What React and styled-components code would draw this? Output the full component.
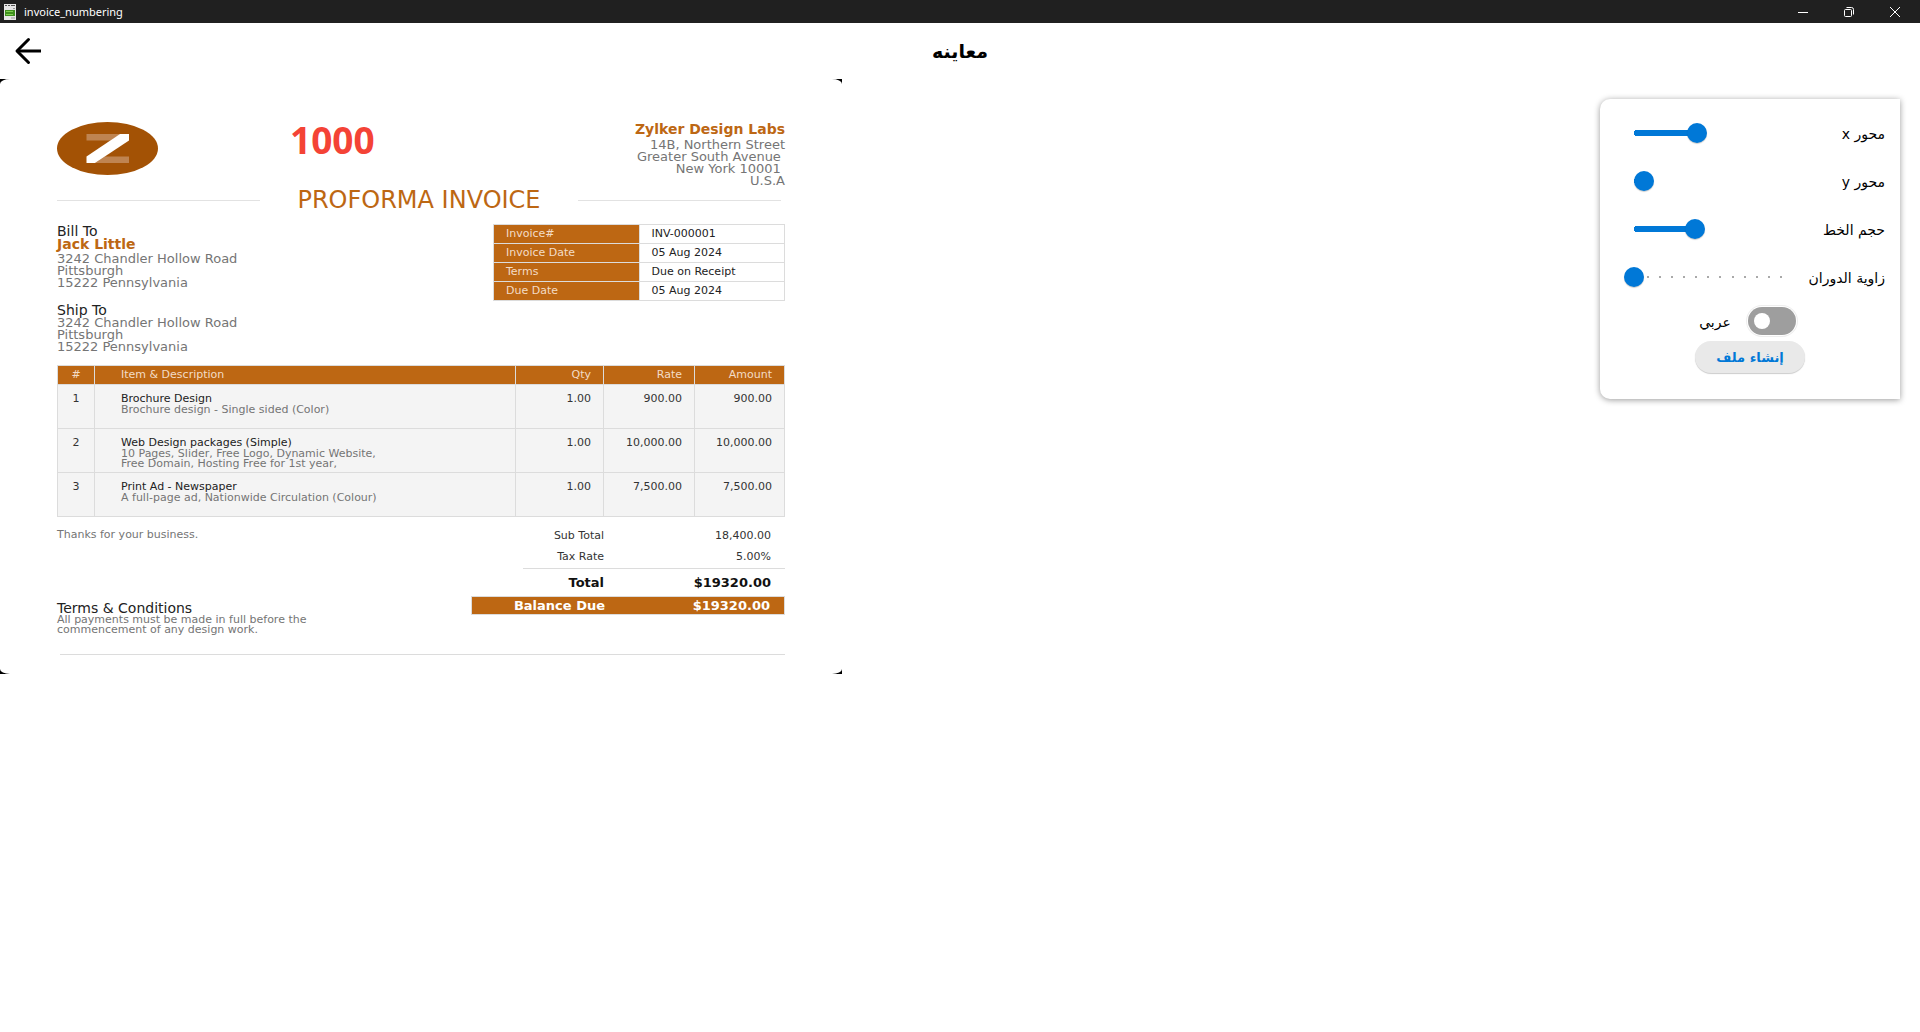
import React, { useState } from "react";
import styled, { createGlobalStyle } from "styled-components";

const infoRows = [
  ["Invoice#", "INV-000001"],
  ["Invoice Date", "05 Aug 2024"],
  ["Terms", "Due on Receipt"],
  ["Due Date", "05 Aug 2024"],
];

const items = [
  {
    title: "Brochure Design",
    lines: ["Brochure design - Single sided (Color)"],
    qty: "1.00",
    rate: "900.00",
    amount: "900.00",
  },
  {
    title: "Web Design packages (Simple)",
    lines: [
      "10 Pages, Slider, Free Logo, Dynamic Website,",
      "Free Domain, Hosting Free for 1st year,",
    ],
    qty: "1.00",
    rate: "10,000.00",
    amount: "10,000.00",
  },
  {
    title: "Print Ad - Newspaper",
    lines: ["A full-page ad, Nationwide Circulation (Colour)"],
    qty: "1.00",
    rate: "7,500.00",
    amount: "7,500.00",
  },
];

const WindowBar = () => (
  <TitleBar>
    <AppIcon viewBox="0 0 12 16">
      <rect width="12" height="16" fill="#e6e6e6" />
      <path d="M1 1.5h2M4 1.5h2M7 1.5h4" stroke="#555" />
      <path d="M9 4.5h2" stroke="#999" />
      <rect x="1" y="6" width="10" height="6" fill="#3f8f1f" />
      <path d="M2 7.5h7M2 10.5h7" stroke="#7fd04f" />
      <path d="M7 14h4" stroke="#999" />
    </AppIcon>
    <AppName>invoice_numbering</AppName>
    <WindowButton aria-label="Minimize">
      <svg width="10" height="10" viewBox="0 0 10 10">
        <path d="M0 5.5h10" stroke="#fff" />
      </svg>
    </WindowButton>
    <WindowButton aria-label="Restore">
      <svg width="10" height="10" viewBox="0 0 10 10" fill="none" stroke="#fff">
        <rect x="0.5" y="2.5" width="7" height="7" rx="1" />
        <path d="M2.5 0.5h5a2 2 0 0 1 2 2v5" />
      </svg>
    </WindowButton>
    <WindowButton aria-label="Close">
      <svg width="10" height="10" viewBox="0 0 10 10">
        <path d="M0 0l10 10M10 0L0 10" stroke="#fff" />
      </svg>
    </WindowButton>
  </TitleBar>
);

const Invoice = () => (
  <Sheet>
    <Paper>
      <PaperHead>
        <Logo viewBox="0 0 101 53">
          <ellipse cx="50.5" cy="26.5" rx="50.5" ry="26.5" fill="#a35205" />
          <path d="M29.5 12h34l-10 6.5h-24zM38 41l10-6.5h24V41z" fill="#bf8451" />
          <path d="M63 12h9v6.5L38 41h-8.500v-6.500z" fill="#fff" />
        </Logo>
        <Company>
          <CompanyName>Zylker Design Labs</CompanyName>
          <Address>
            {"14B, Northern Street\nGreater South Avenue \nNew York 10001 \nU.S.A"}
          </Address>
        </Company>
      </PaperHead>

      <HeadingRow>
        <Rule />
        <Heading>PROFORMA INVOICE</Heading>
        <Rule />
      </HeadingRow>

      <Parties>
        <div>
          <PartyTitle>Bill To</PartyTitle>
          <PartyName>Jack Little</PartyName>
          <Address>
            {"3242 Chandler Hollow Road\nPittsburgh\n15222 Pennsylvania"}
          </Address>
          <ShipTo>
            <PartyTitle>Ship To</PartyTitle>
            <Address>
              {"3242 Chandler Hollow Road\nPittsburgh\n15222 Pennsylvania"}
            </Address>
          </ShipTo>
        </div>
        <InfoTable>
          <tbody>
            {infoRows.map(([name, value]) => (
              <tr key={name}>
                <th scope="row">{name}</th>
                <td>{value}</td>
              </tr>
            ))}
          </tbody>
        </InfoTable>
      </Parties>

      <ItemsTable>
        <colgroup>
          <Col $width="37px" />
          <Col />
          <Col $width="88px" />
          <Col $width="91px" />
          <Col $width="90px" />
        </colgroup>
        <thead>
          <tr>
            <HeadCell $align="center">#</HeadCell>
            <HeadCell $align="left">Item &amp; Description</HeadCell>
            <HeadCell>Qty</HeadCell>
            <HeadCell>Rate</HeadCell>
            <HeadCell>Amount</HeadCell>
          </tr>
        </thead>
        <tbody>
          {items.map((item, i) => (
            <tr key={item.title}>
              <Cell $align="center">{i + 1}</Cell>
              <Cell $align="left">
                <ItemTitle>{item.title}</ItemTitle>
                <ItemText>{item.lines.join("\n")}</ItemText>
              </Cell>
              <Cell>{item.qty}</Cell>
              <Cell>{item.rate}</Cell>
              <Cell>{item.amount}</Cell>
            </tr>
          ))}
        </tbody>
      </ItemsTable>

      <Bottom>
        <Notes>
          <Thanks>Thanks for your business.</Thanks>
          <div>
            <PartyTitle>Terms &amp; Conditions</PartyTitle>
            <ItemText>
              {"All payments must be made in full before the\ncommencement of any design work."}
            </ItemText>
          </div>
        </Notes>
        <Totals>
          <TotalRow>
            <span>Sub Total</span>
            <span>18,400.00</span>
          </TotalRow>
          <TotalRow>
            <span>Tax Rate</span>
            <span>5.00%</span>
          </TotalRow>
          <TotalsRule />
          <GrandRow>
            <span>Total</span>
            <span>$19320.00</span>
          </GrandRow>
          <BalanceRow>
            <span>Balance Due</span>
            <span>$19320.00</span>
          </BalanceRow>
        </Totals>
      </Bottom>
      <EndRule />
    </Paper>
    <Stamp>1000</Stamp>
  </Sheet>
);

const SliderRow = ({ id, label, initial, ticks = 0 }) => {
  const [value, setValue] = useState(initial);
  return (
    <Row>
      <SliderBox>
        {ticks > 0 && (
          <Ticks>
            {Array.from({ length: ticks }, (_, i) => (
              <i key={i} />
            ))}
          </Ticks>
        )}
        <Slider
          id={id}
          type="range"
          min="0"
          max="150"
          value={value}
          onChange={(e) => setValue(Number(e.target.value))}
          style={{ "--pos": `${(value / 150) * 88 + 6}%` }}
        />
      </SliderBox>
      <Label htmlFor={id}>{label}</Label>
    </Row>
  );
};

const Settings = () => (
  <Panel>
    <SliderRow id="axis-x" label="محور x" initial={63} />
    <SliderRow id="axis-y" label="محور y" initial={10} />
    <SliderRow id="font-size" label="حجم الخط" initial={61} />
    <SliderRow id="rotation" label="زاوية الدوران" initial={0} ticks={12} />
    <SwitchRow>
      <Label htmlFor="arabic">عربي</Label>
      <Switch id="arabic" type="checkbox" role="switch" />
    </SwitchRow>
    <CreateButton>إنشاء ملف</CreateButton>
  </Panel>
);

const App = () => (
  <>
    <GlobalStyle />
    <WindowBar />
    <AppBar>
      <BackButton aria-label="رجوع">
        <svg
          width="40"
          height="40"
          viewBox="0 0 40 40"
          fill="none"
          stroke="#000"
          strokeWidth="3"
        >
          <path d="M33 20H9" />
          <path d="M20.500 8.500L9 20l11.500 11.500" strokeLinecap="round" strokeLinejoin="round" />
        </svg>
      </BackButton>
      <PageTitle dir="rtl">معاينه</PageTitle>
    </AppBar>
    <Main>
      <Invoice />
      <Settings />
    </Main>
  </>
);

const GlobalStyle = createGlobalStyle`
  * {
    box-sizing: border-box;
  }
  body {
    margin: 0;
    background: #fff;
    color: #000;
    font-family: "Noto Sans", "DejaVu Sans", sans-serif;
  }
  button {
    padding: 0;
    border: none;
    background: none;
    font-family: inherit;
  }
`;

const TitleBar = styled.header`
  display: flex;
  align-items: center;
  height: 23px;
  padding: 0 2px 0 4px;
  background: #202020;
`;

const AppIcon = styled.svg`
  width: 12px;
  height: 16px;
`;

const AppName = styled.span`
  flex: 1;
  padding-left: 8px;
  color: #fff;
  font-size: 11px;
`;

const WindowButton = styled.button`
  display: flex;
  align-items: center;
  justify-content: center;
  width: 46px;
  height: 20px;
`;

const AppBar = styled.nav`
  display: grid;
  grid-template-columns: 1fr auto 1fr;
  align-items: center;
  height: 56px;
  padding: 0 8px;
`;

const BackButton = styled.button`
  width: 40px;
  height: 40px;
`;

const PageTitle = styled.h1`
  margin: 0;
  font-family: "DejaVu Sans", sans-serif;
  font-size: 19px;
  font-weight: 700;
`;

const Main = styled.main`
  display: flex;
  align-items: flex-start;
  justify-content: space-between;
`;

const Sheet = styled.section`
  position: relative;
  flex: 0 1 842px;
  background: #000;
`;

const Paper = styled.article`
  padding: 32px 57px 19px;
  border-radius: 10px / 5px;
  background: #fff;
  color: #757575;
  font-family: "DejaVu Sans", sans-serif;
  font-size: 11px;
`;

const Stamp = styled.div`
  position: absolute;
  top: 36px;
  left: 290px;
  color: #f44336;
  font-size: 37px;
  font-weight: 700;
  line-height: 50px;
`;

const PaperHead = styled.div`
  display: flex;
  justify-content: space-between;
  height: 77px;
`;

const Logo = styled.svg`
  width: 101px;
  height: 53px;
  margin-top: 11px;
`;

const Company = styled.div`
  padding-top: 11px;
  text-align: right;
`;

const CompanyName = styled.div`
  margin-bottom: 3px;
  color: #bd6713;
  font-size: 14px;
  font-weight: 700;
  line-height: 14px;
`;

const Address = styled.div`
  font-size: 13px;
  line-height: 12px;
  white-space: pre;
`;

const HeadingRow = styled.div`
  display: grid;
  grid-template-columns: 203px 1fr 203px;
  align-items: center;
  height: 24px;
  padding-right: 4px;
`;

const Rule = styled.div`
  height: 1px;
  background: #e2e2e2;
`;

const Heading = styled.h2`
  margin: 0;
  color: #bd6713;
  font-size: 24px;
  font-weight: 400;
  line-height: 24px;
  text-align: center;
`;

const Parties = styled.div`
  display: flex;
  align-items: flex-start;
  justify-content: space-between;
  height: 153px;
  padding-top: 12px;
`;

const PartyTitle = styled.div`
  color: #222;
  font-size: 14px;
  line-height: 14px;
`;

const PartyName = styled.div`
  margin-bottom: 3px;
  color: #bd6713;
  font-size: 14px;
  font-weight: 700;
  line-height: 12px;
`;

const ShipTo = styled.div`
  margin-top: 14px;
`;

const InfoTable = styled.table`
  width: 292px;
  border-collapse: collapse;
  line-height: 18px;

  th,
  td {
    width: 50%;
    height: 19px;
    padding: 0 12px;
    border: 1px solid #dcdcdc;
    color: #222;
    font-weight: 400;
    text-align: left;
  }
  th {
    background: #bd6713;
    color: #f3dcc6;
  }
`;

const ItemsTable = styled.table`
  width: 100%;
  border-collapse: collapse;
  table-layout: fixed;
`;

const Col = styled.col`
  width: ${({ $width }) => $width || "auto"};
`;

const HeadCell = styled.th`
  height: 19px;
  padding: 0 12px 0 ${({ $align }) => ($align === "left" ? "26px" : "12px")};
  border: 1px solid #dcdcdc;
  background: #bd6713;
  color: #f3dcc6;
  font-weight: 400;
  line-height: 14px;
  text-align: ${({ $align }) => $align || "right"};
`;

const Cell = styled.td`
  height: 44px;
  padding: 8px 12px 0 ${({ $align }) => ($align === "left" ? "26px" : "12px")};
  border: 1px solid #dcdcdc;
  background: #f4f4f4;
  color: #333;
  line-height: 12px;
  text-align: ${({ $align }) => $align || "right"};
  vertical-align: top;
`;

const ItemTitle = styled.div`
  color: #222;
`;

const ItemText = styled.div`
  color: #757575;
  line-height: 10px;
  white-space: pre;
`;

const Bottom = styled.div`
  display: flex;
  justify-content: space-between;
`;

const Notes = styled.div`
  display: flex;
  flex-direction: column;
  justify-content: space-between;
  height: 118px;
  padding-top: 11px;
`;

const Thanks = styled.div`
  line-height: 14px;
`;

const Totals = styled.div`
  width: 314px;
  padding-top: 8px;
`;

const TotalRow = styled.div`
  display: grid;
  grid-template-columns: 133px 1fr;
  height: 21px;
  padding-right: 14px;
  color: #333;
  line-height: 21px;
  text-align: right;
`;

const TotalsRule = styled.div`
  height: 1px;
  margin: 1px 0 0 52px;
  background: #dcdcdc;
`;

const GrandRow = styled(TotalRow)`
  height: 27px;
  color: #111;
  font-size: 13px;
  font-weight: 700;
  line-height: 27px;
`;

const BalanceRow = styled(TotalRow)`
  height: 19px;
  border: 1px solid #dcdcdc;
  background: #bd6713;
  color: #fff;
  font-size: 13px;
  font-weight: 700;
  line-height: 17px;
`;

const EndRule = styled.div`
  height: 1px;
  margin-top: 19px;
  margin-left: 3px;
  background: #dcdcdc;
`;

const Panel = styled.aside`
  display: flex;
  flex-direction: column;
  align-items: center;
  flex: 0 0 300px;
  margin: 20px;
  padding: 10px 0 26px;
  border-radius: 10px 0 0 10px;
  background: #fff;
  box-shadow: 0 1px 6px rgba(0, 0, 0, 0.4);
`;

const Row = styled.div`
  display: flex;
  align-items: center;
  justify-content: space-between;
  width: 100%;
  height: 48px;
  padding: 0 15px 0 24px;
`;

const Label = styled.label`
  padding-top: 2px;
  direction: rtl;
  font-family: "DejaVu Sans", sans-serif;
  font-size: 14px;
`;

const SliderBox = styled.div`
  display: grid;
  align-items: center;
  width: 170px;

  > * {
    grid-area: 1 / 1;
  }
`;

const Ticks = styled.div`
  display: flex;
  justify-content: space-between;
  margin: 0 12px 0 23px;

  i {
    width: 2px;
    height: 2px;
    border-radius: 50%;
    background: #8c8c8c;
  }
`;

const Slider = styled.input`
  width: 100%;
  height: 20px;
  margin: 0;
  background: none;
  appearance: none;

  &::-webkit-slider-runnable-track {
    height: 6px;
    background: radial-gradient(
        circle at 13px 3px,
        #0078d7 3px,
        transparent 3px
      ),
      linear-gradient(
        to right,
        transparent 13px,
        #0078d7 13px,
        #0078d7 var(--pos),
        transparent var(--pos)
      );
  }
  &::-webkit-slider-thumb {
    width: 20px;
    height: 20px;
    margin-top: -7px;
    border-radius: 50%;
    background: #0078d7;
    box-shadow: 0 1px 1px rgba(0, 0, 0, 0.2);
    appearance: none;
  }
`;

const SwitchRow = styled.div`
  display: flex;
  align-items: center;
  gap: 17px;
  height: 40px;
  padding-right: 5px;
`;

const Switch = styled.input`
  display: flex;
  align-items: center;
  width: 48px;
  height: 28px;
  margin: 0;
  padding: 0 6px;
  border-radius: 14px;
  background: #9e9e9e;
  box-shadow: 0 0 0 1px #fff, 0 0 0 2px #eee;
  appearance: none;

  &::before {
    content: "";
    width: 16px;
    height: 16px;
    border-radius: 50%;
    background: #fff;
  }
  &:checked {
    justify-content: flex-end;
    background: #0078d7;
  }
`;

const CreateButton = styled.button`
  width: 110px;
  height: 32px;
  border-radius: 16px;
  background: #e9e9e9;
  box-shadow: 0 1px 1px rgba(0, 0, 0, 0.2);
  color: #0078d7;
  direction: rtl;
  font-family: "DejaVu Sans", sans-serif;
  font-size: 13px;
  font-weight: 700;
`;

export default App;
